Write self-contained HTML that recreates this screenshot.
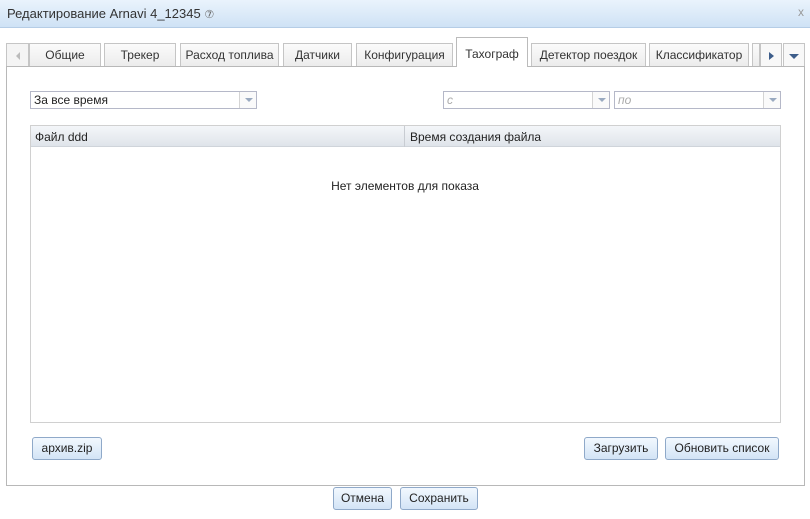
<!DOCTYPE html>
<html><head><meta charset="utf-8"><style>
*{box-sizing:border-box;margin:0;padding:0}
body{width:810px;height:519px;background:#fff;font-family:"Liberation Sans","DejaVu Sans",sans-serif;font-size:12px;color:#222;position:relative;overflow:hidden}
.abs{position:absolute}
.hdr{left:0;top:0;width:810px;height:28px;background:linear-gradient(#eaf3fc,#cfe2f5);border-bottom:1px solid #b5cde6}
.hdr .t{left:7px;top:6px;font-size:13px;color:#333}
.tab{top:43px;height:24px;border:1px solid #c5c5c5;border-bottom:none;background:linear-gradient(#fbfbfb,#ebebeb);text-align:center;line-height:23px;color:#333}
.tab.act{top:37px;height:30px;background:#fff;border-color:#bbb;line-height:32px;z-index:2}
.panel{left:6px;top:66px;width:799px;height:420px;border:1px solid #b8b8b8;background:#fff}
.combo{height:18px;border:1px solid #b5b8c8;background:#fff;line-height:16px;padding-left:3px}
.combo .b{position:absolute;right:0;top:0;width:17px;height:16px;border-left:1px solid #d4d4d4;background:#fafafa}
.combo .b:after{content:"";position:absolute;left:5px;top:6px;border-left:4px solid transparent;border-right:4px solid transparent;border-top:4px solid #9aaac0}
.ph{color:#aaa;font-style:italic}
.btn{height:23px;border:1px solid #8fa9c9;border-radius:3px;background:linear-gradient(#f2f8fe,#d3e4f6);text-align:center;line-height:21px;color:#222}
</style></head><body>
<div class="abs hdr"><div class="abs t">Редактирование Arnavi 4_12345 <span style="font-size:11px;color:#666">⑦</span></div><div class="abs" style="right:6px;top:5px;color:#999;font-size:12px">x</div></div>

<div class="abs tab" style="left:6px;width:23px;background:#f4f4f4"><span style="display:inline-block;margin-top:8px;border-top:4px solid transparent;border-bottom:4px solid transparent;border-right:4px solid #bbb;vertical-align:top"></span></div>
<div class="abs tab" style="left:29px;width:72px">Общие</div>
<div class="abs tab" style="left:104px;width:72px">Трекер</div>
<div class="abs tab" style="left:180px;width:99px">Расход топлива</div>
<div class="abs tab" style="left:283px;width:69px">Датчики</div>
<div class="abs tab" style="left:356px;width:97px">Конфигурация</div>
<div class="abs tab act" style="left:456px;width:72px">Тахограф</div>
<div class="abs tab" style="left:531px;width:115px">Детектор поездок</div>
<div class="abs tab" style="left:649px;width:100px">Классификатор</div>
<div class="abs tab" style="left:752px;width:8px"></div>
<div class="abs tab" style="left:760px;width:22px;background:#f8f8f8"><span style="display:inline-block;margin-top:8px;border-top:4px solid transparent;border-bottom:4px solid transparent;border-left:5px solid #3d5d8a;vertical-align:top"></span></div>
<div class="abs tab" style="left:783px;width:22px;background:#f8f8f8"><span style="display:inline-block;margin-top:10px;border-left:5px solid transparent;border-right:5px solid transparent;border-top:5px solid #3d5d8a;vertical-align:top"></span></div>

<div class="abs panel"></div>

<div class="abs combo" style="left:30px;top:91px;width:227px">За все время<div class="b"></div></div>
<div class="abs combo ph" style="left:443px;top:91px;width:167px">с<div class="b"></div></div>
<div class="abs combo ph" style="left:614px;top:91px;width:167px">по<div class="b"></div></div>

<div class="abs" style="left:30px;top:125px;width:751px;height:298px;border:1px solid #d0d0d0"></div>
<div class="abs" style="left:31px;top:126px;width:749px;height:21px;background:linear-gradient(#f4f6f9,#dfe4ea);border-bottom:1px solid #cfd4da"></div>
<div class="abs" style="left:404px;top:126px;width:1px;height:21px;background:#c8ccd2"></div>
<div class="abs" style="left:35px;top:130px">Файл ddd</div>
<div class="abs" style="left:410px;top:130px">Время создания файла</div>
<div class="abs" style="left:0;width:810px;top:179px;text-align:center;padding-left:0px"><span style="position:relative;left:0px">Нет элементов для показа</span></div>

<div class="abs btn" style="left:32px;top:437px;width:70px">архив.zip</div>
<div class="abs btn" style="left:584px;top:437px;width:74px">Загрузить</div>
<div class="abs btn" style="left:665px;top:437px;width:114px">Обновить список</div>

<div class="abs btn" style="left:333px;top:487px;width:59px">Отмена</div>
<div class="abs btn" style="left:400px;top:487px;width:78px">Сохранить</div>
</body></html>
